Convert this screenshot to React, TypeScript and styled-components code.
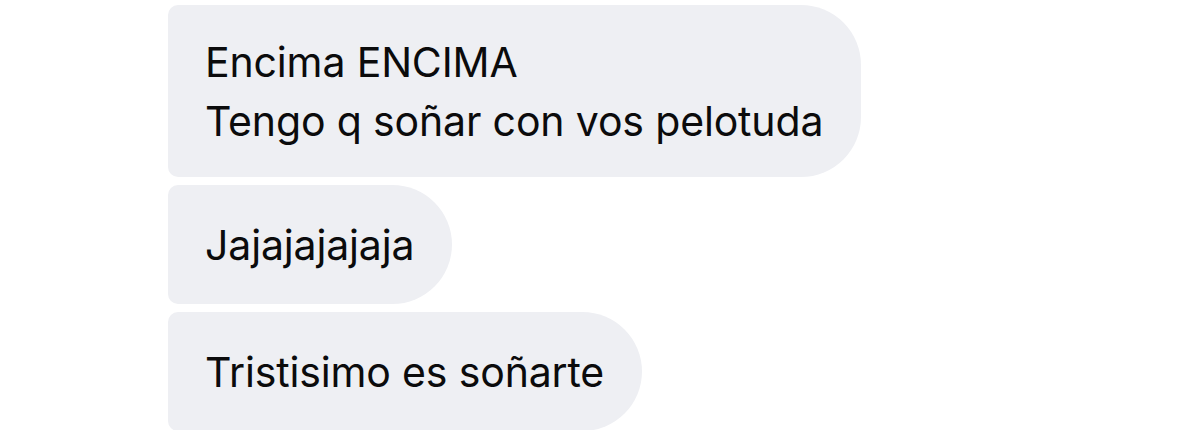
import React from "react";
import styled, { createGlobalStyle } from "styled-components";

const GlobalStyle = createGlobalStyle`
  html, body {
    margin: 0;
    padding: 0;
    background: #ffffff;
  }
  body {
    font-family: Inter, "Noto Sans", "Liberation Sans", sans-serif;
    -webkit-font-smoothing: antialiased;
  }
`;

const Thread = styled.div`
  display: flex;
  flex-direction: column;
  align-items: flex-start;
  gap: 8px;
  padding: 5px 0 0 168px;
  height: 430px;
  box-sizing: border-box;
  overflow: hidden;
`;

const Bubble = styled.div`
  display: flex;
  flex-direction: column;
  justify-content: center;
  box-sizing: border-box;
  min-height: 119px;
  background: #eeeff3;
  color: #0b0b0c;
  font-size: 41px;
  line-height: 59px;
  letter-spacing: -0.15px;
  padding: 28px 38px 26px 37px;
  border-radius: 10px 60px 60px 10px;
  white-space: nowrap;
  flex-shrink: 0;
`;

const Line = styled.div``;

const messages: string[][] = [
  ["Encima ENCIMA", "Tengo q soñar con vos pelotuda"],
  ["Jajajajajaja"],
  ["Tristisimo es soñarte"],
];

export default function App() {
  return (
    <>
      <GlobalStyle />
      <Thread>
        {messages.map((lines, i) => (
          <Bubble key={i}>
            {lines.map((l, j) => (
              <Line key={j}>{l}</Line>
            ))}
          </Bubble>
        ))}
      </Thread>
    </>
  );
}
